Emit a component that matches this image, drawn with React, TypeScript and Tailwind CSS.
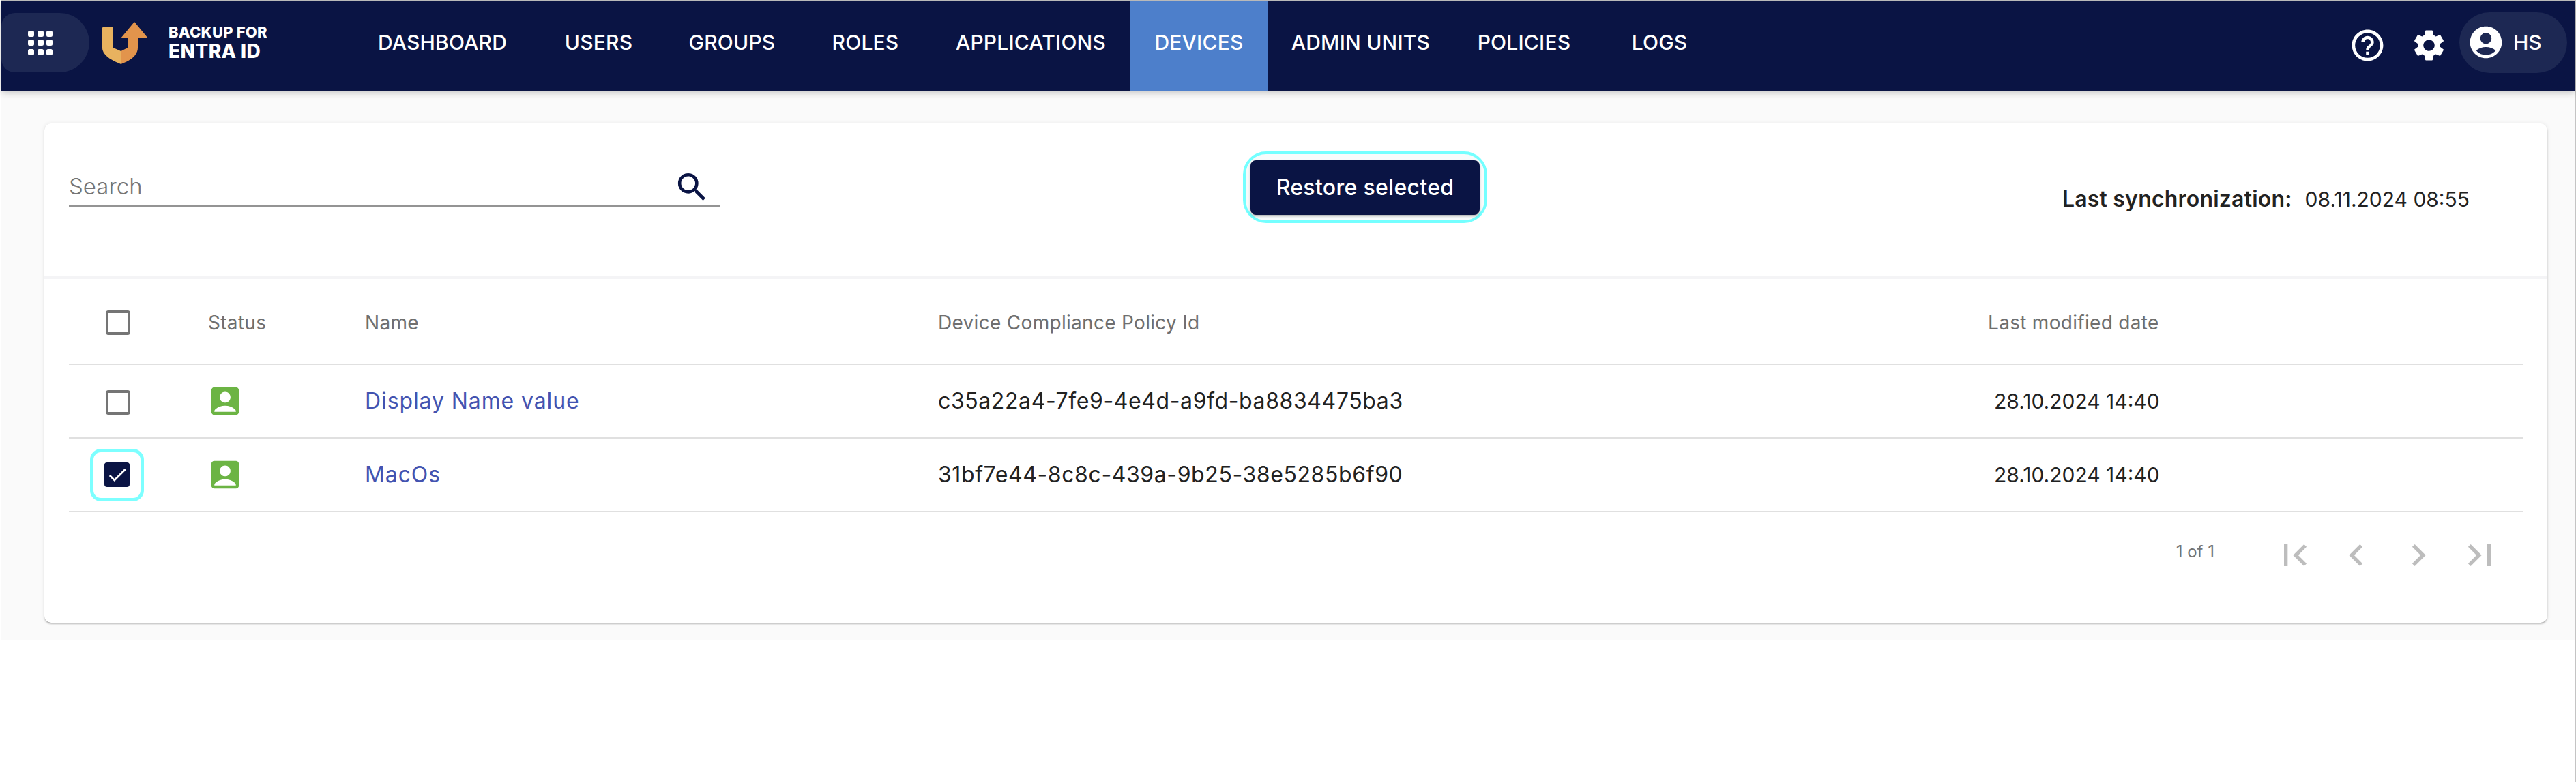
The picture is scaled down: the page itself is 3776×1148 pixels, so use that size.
import { MdAccountBox, MdAccountCircle, MdCheck, MdChevronLeft, MdChevronRight, MdFirstPage, MdHelpOutline, MdLastPage, MdSearch, MdSettings } from 'react-icons/md';

const navItems = [
  { label: 'DASHBOARD', width: 'w-[265px]' },
  { label: 'USERS', width: 'w-[193px]' },
  { label: 'GROUPS', width: 'w-[198px]' },
  { label: 'ROLES', width: 'w-[193px]' },
  { label: 'APPLICATIONS', width: 'w-[292px]' },
  { label: 'DEVICES', width: 'w-[201px]', active: true },
  { label: 'ADMIN UNITS', width: 'w-[273px]' },
  { label: 'POLICIES', width: 'w-[206px]' },
  { label: 'LOGS', width: 'w-[191px]' },
];

const devices = [
  { name: 'Display Name value', policyId: 'c35a22a4-7fe9-4e4d-a9fd-ba8834475ba3', modified: '28.10.2024 14:40', selected: false },
  { name: 'MacOs', policyId: '31bf7e44-8c8c-439a-9b25-38e5285b6f90', modified: '28.10.2024 14:40', selected: true },
];

const rowGrid = 'grid grid-cols-[204px_230px_840px_1539px_1fr] items-center';

function Logo() {
  return (
    <svg width="67" height="62" viewBox="0 0 67 62" className="shrink-0">
      <path d="M1 8h14a1 1 0 0 1 1 1v29l11.3 5V62C17 58 3 51 0.6 42 0 40 0 39 0 37V9a1 1 0 0 1 1-1z" fill="#e8b25f" />
      <path d="M27.3 43 38 37.5V24H27L47 0l20 24H52v14c0 3-1 7-4 11-5 6-13 10-20.700 13z" fill="#e2944c" />
    </svg>
  );
}

function AppsButton() {
  return (
    <div className="mt-[18px] flex h-[87px] w-[129px] shrink-0 items-center rounded-l-[20px] rounded-r-[44px] bg-[#1d2853] pl-[39px]">
      <div className="grid grid-cols-[9px_9px_9px] gap-[4.500px]">
        {Array.from({ length: 9 }).map((_, i) => (
          <span key={i} className="h-[9px] w-[9px] rounded-[2.500px] bg-white" />
        ))}
      </div>
    </div>
  );
}

function Header() {
  return (
    <header className="relative z-10 flex h-[132px] bg-[#0a1444] shadow-[0_3px_10px_rgba(0,0,0,0.22)]">
      <AppsButton />
      <div className="flex w-[385px] shrink-0 items-start pl-[19px] pt-[31px]">
        <Logo />
        <div className="ml-[30px] mt-[3px] font-['Inter',sans-serif] font-extrabold text-white">
          <div className="text-[22px] leading-[24px] tracking-[0.2px]">BACKUP FOR</div>
          <div className="mt-[2px] text-[28px] leading-[28px] tracking-[0.4px]">ENTRA ID</div>
        </div>
      </div>
      <nav className="flex">
        {navItems.map((item) => (
          <div
            key={item.label}
            className={`flex h-full items-center justify-center pb-[9px] text-[30px] font-medium tracking-[0.2px] text-white ${item.width} ${item.active ? 'bg-[#4d7fcb]' : ''}`}
          >
            {item.label}
          </div>
        ))}
      </nav>
      <div className="ml-auto mr-[12px] flex items-start pt-[17px]">
        <MdHelpOutline className="mr-[35px] mt-[21px] text-white" size={55} />
        <MdSettings className="mr-[17px] mt-[21px] text-white" size={55} />
        <div className="flex h-[89px] w-[158px] items-center rounded-[45px] bg-[#1d2853] pl-[11px] text-white">
          <MdAccountCircle size={56} className="mb-[2px]" />
          <span className="ml-[12px] text-[30px] font-medium">HS</span>
        </div>
      </div>
    </header>
  );
}

function Toolbar() {
  return (
    <div className="flex h-[224px] items-start pl-[36px] pr-[114px]">
      <div className="mt-[66px] flex h-[57px] w-[955px] shrink-0 items-center justify-between border-b-[3px] border-[#949494] pr-[14px]">
        <span className="text-[33px] font-light text-[#757575]">Search</span>
        <MdSearch size={55} className="text-[#0a1444]" />
      </div>
      <div className="ml-[766px] mt-[41px] rounded-[34px] border-[4px] border-[#74ffff] bg-[#f8fbfb] px-[7px] pb-[8px] pt-[9px]">
        <button className="flex h-[80px] w-[336px] items-center justify-center rounded-[8px] bg-[#0a1444] text-[32px] font-medium tracking-[0.3px] text-white shadow-[0_2px_4px_-1px_rgba(0,0,0,0.4)]">
          Restore selected
        </button>
      </div>
      <div className="ml-auto mt-[91px] text-[30px] leading-[40px] text-[#222]">
        <span className="text-[32px] font-semibold tracking-[0.2px]">Last synchronization:</span>
        <span className="ml-[19px]">08.11.2024 08:55</span>
      </div>
    </div>
  );
}

function Checkbox({ checked }: { checked?: boolean }) {
  if (checked) {
    return (
      <span className="flex h-[36px] w-[37px] items-center justify-center rounded-[4px] bg-[#0a1444] text-white">
        <MdCheck size={34} />
      </span>
    );
  }
  return <span className="block h-[36px] w-[36px] rounded-[4px] border-[4px] border-[#757575]" />;
}

function DeviceTable() {
  return (
    <div className="mx-[36px] text-[32px] tracking-[0.9px]">
      <div className={`${rowGrid} h-[126px] border-b-[2px] border-[#e0e0e0] pt-[4px] text-[28px] tracking-[0.3px] text-[#6f6f6f]`}>
        <div className="pl-[54px]">
          <Checkbox />
        </div>
        <div>Status</div>
        <div>Name</div>
        <div>Device Compliance Policy Id</div>
        <div>Last modified date</div>
      </div>
      {devices.map((d) => (
        <div key={d.name} className={`${rowGrid} h-[108px] border-b-[2px] border-[#e0e0e0] text-[#222]`}>
          {d.selected ? (
            <div className="pl-[31px]">
              <div className="flex h-[77px] w-[79px] items-center justify-center rounded-[16px] border-[5px] border-[#7dffff]">
                <Checkbox checked />
              </div>
            </div>
          ) : (
            <div className="pl-[54px] pt-[4px]">
              <Checkbox />
            </div>
          )}
          <div>
            <MdAccountBox size={54} className="-ml-[2px] text-[#6cb444]" />
          </div>
          <div className="text-[#4353b0]">{d.name}</div>
          <div className="tracking-[0.6px]">{d.policyId}</div>
          <div className="pl-[9px] text-[30px] tracking-normal">{d.modified}</div>
        </div>
      ))}
    </div>
  );
}

function Pagination() {
  return (
    <div className="flex items-start justify-end pr-[67px] pt-[31px] text-[#bdbdbd]">
      <span className="mr-[86px] text-[24px] leading-[54px] text-[#757575]">1 of 1</span>
      <MdFirstPage size={64} />
      <MdChevronLeft size={64} className="ml-[26px]" />
      <MdChevronRight size={64} className="ml-[27px]" />
      <MdLastPage size={64} className="ml-[26px]" />
    </div>
  );
}

export default function App() {
  return (
    <div className="h-[1148px] bg-white pb-px pl-px font-['Inter',sans-serif]">
      <div className="h-full border border-[#c4c4c4]">
        <Header />
        <main className="h-[805px] bg-[#fafafa] pl-[63px] pr-[41px] pt-[48px]">
          <div className="h-[732px] rounded-[10px] bg-white shadow-[0_2px_3px_-1px_rgba(0,0,0,0.45),0_0_6px_rgba(0,0,0,0.08)]">
            <Toolbar />
            <div className="h-[4px] bg-[#f4f4f6]" />
            <DeviceTable />
            <Pagination />
          </div>
        </main>
      </div>
    </div>
  );
}
